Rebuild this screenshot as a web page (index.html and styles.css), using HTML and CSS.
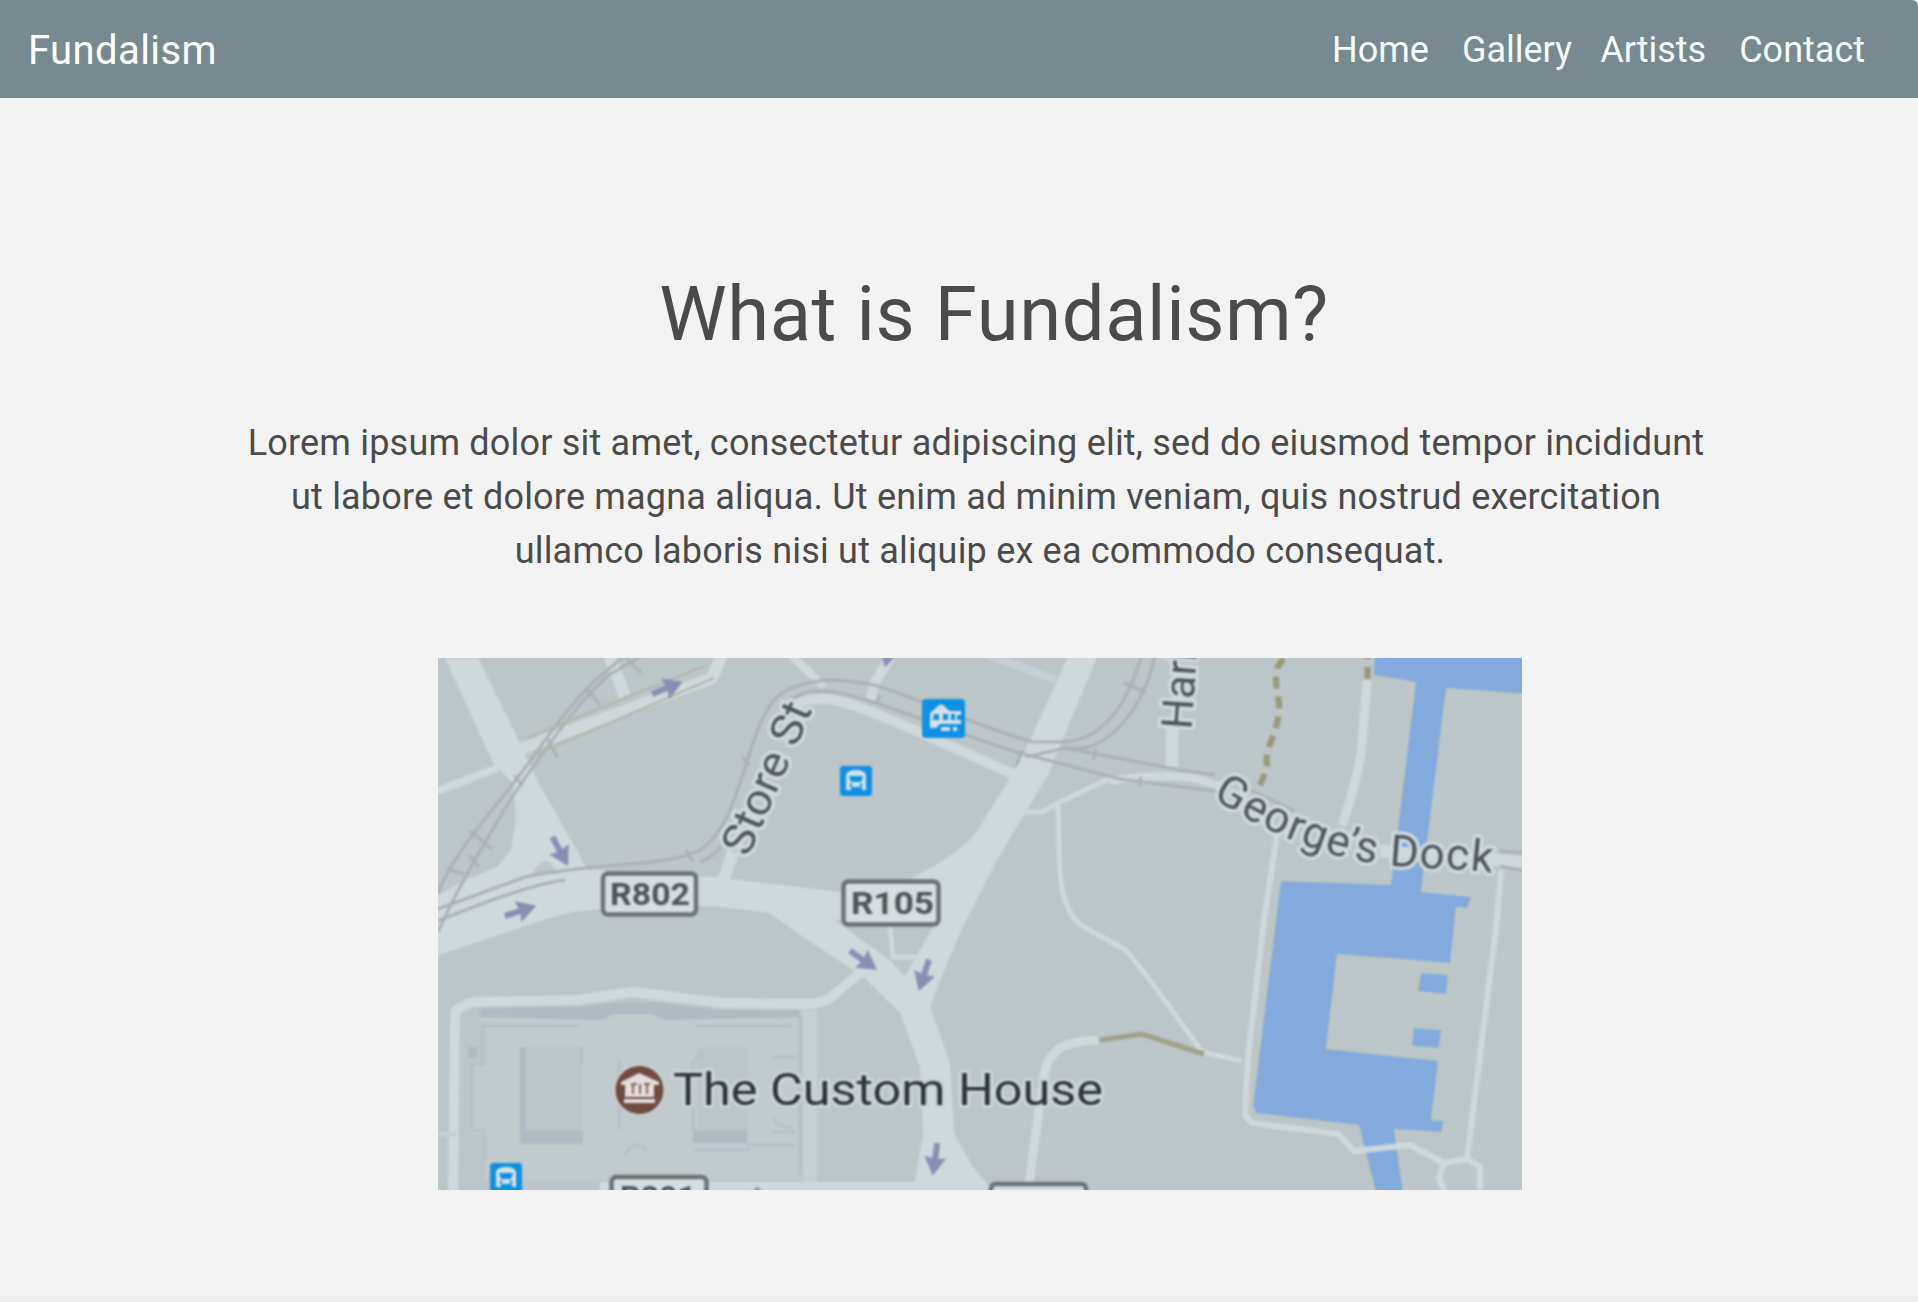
FILE: index.html
```html
<!DOCTYPE html>
<html lang="en">
<head>
<meta charset="utf-8">
<title>Fundalism</title>
<link rel="stylesheet" href="styles.css">
</head>
<body>
<header class="navbar">
  <a class="brand">Fundalism</a>
  <nav class="links">
    <a class="home">Home</a>
    <a class="gallery">Gallery</a>
    <a class="artists">Artists</a>
    <a>Contact</a>
  </nav>
</header>
<main class="content">
  <h1 class="title">What is Fundalism?</h1>
  <p class="intro">Lorem ipsum dolor sit amet, consectetur adipiscing elit, sed do eiusmod tempor incididunt<br>ut labore et dolore magna aliqua. Ut enim ad minim veniam, quis nostrud exercitation<br><span class="last">ullamco laboris nisi ut aliquip ex ea commodo consequat.</span></p>
  <svg class="map" viewBox="438 658 1084 532" role="img" aria-label="Map">
    <defs>
      <path id="dock" d="M1212 798C1250 821 1272 833 1310 847S1380 865 1409 867S1470 869 1510 875"/>
      <g id="arrow"><path class="arrow-line" d="M-16 0H3"/><path class="arrow-head" d="M17 0L-2-11L0 0L-2 11Z"/></g>
      <g id="bus">
        <rect class="sign" width="32" height="30" rx="3"/>
        <path class="glyph" d="M6 24V9Q7 4 16 4T26 9V24H22V21H11V24Z"/>
        <path class="sign" d="M9 10H23L21 16H11Z"/><circle class="sign" cx="11" cy="19" r="1.5"/><circle class="sign" cx="21" cy="19" r="1.5"/>
      </g>
    </defs>
    <g class="soft">
      <rect class="land" x="430" y="650" width="1100" height="550"/>
      <!-- Streets -->
      <path class="road" d="M445 658L493 763L513 783L516 817L511 850L497 867L463 881L430 900V958L543 920L573 912L630 907L713 906L770 913L800 935L850 968L863 977L900 1013L920 1067L923 1133L915 1182H600V1200H1000L973 1167L954 1133L950 1063L930 1007L947 963L963 927L997 860L1027 810L1047 777L1100 650H1071L1030 740L1013 773L973 837C955 853 935 867 913 877L890 892H840L800 887L713 877L588 870L537 780L520 743L478 658Z"/>
      <path class="land" d="M834 920H937L905 976L890 960Z"/>
      <path class="land" d="M530 877Q541 859 548 861L560 873Z"/>
      <g class="street">
        <path class="w8" d="M430 794L497 768M786 650L824 687"/>
        <path class="w12" d="M521 749L712 678L724 650M607 650L625 696M723 882L733 852"/>
        <path class="w10" d="M788 710Q805 696 834 700C862 705 930 737 1013 774M870 700L875 682L892 655"/>
        <path class="w8 dim" d="M986 654L1056 680"/>
        <path class="w12" d="M1172 720V768"/>
        <path class="w8" d="M1110 781Q1190 768 1226 790M1380 851L1522 862"/>
        <path class="w5" d="M1023 812H1042L1058 803L1110 778M1058 804C1060 845 1057 884 1067 905Q1073 921 1084 927L1124 949Q1133 955 1202 1052L1242 1061"/>
        <path class="w9" d="M1367 680L1362 745Q1358 780 1342 825M1029 1184L1043 1080Q1046 1055 1064 1046Q1073 1042 1098 1040"/>
        <path class="w6" d="M1277 835L1264 920L1248 1058L1245 1115L1252 1123L1338 1134L1354 1151L1410 1145L1444 1163L1467 1159L1497 920L1501 870M1444 1163L1439 1178L1446 1195M1467 1159L1480 1167V1195"/>
        <path class="w5" d="M890 925L893 957H918"/>
        <path class="w10" d="M453 1195L455 1012Q467 1001 477 1002L577 1000L633 992L723 1003L806 1004Q821 1004 830 998L863 970"/>
        <path class="w14 dim" d="M810 1010V1182"/>
        <path class="w5 dim" d="M438 1134H457"/>
      </g>
      <!-- Custom House building -->
      <path class="building" d="M480 1010H802V1180H485V1130H472V1064H485Z"/>
      <path class="shade" d="M480 1008L580 1007L620 1002H650L720 1010H800V1017L665 1020L650 1014H615L600 1020L480 1017ZM520 1047H526V1130H583V1144H520ZM693 1130H747V1143H693Z"/>
      <path class="land" d="M527 1047H582V1130H527ZM697 1047H748V1130H697Z"/>
      <path class="outline" d="M578 1026H483V1064H472V1130H485V1160M695 1026H792M800 1015V1052V1175M693 1130V1063L705 1050M747 1145H795M619 1060V1130M773 1057H797M773 1132H795M694 1150H750M582 1047V1065M625 1155Q636 1136 648 1153M774 1118Q780 1130 793 1127"/>
      <rect class="shade" x="468" y="1047" width="9" height="11"/>
      <!-- Dock water -->
      <g class="water">
        <path d="M1375 650H1530V694L1446 688L1421 892L1471 897L1467 908L1456 907L1450 963L1337 954L1326 1049L1438 1061L1431 1120L1444 1121L1441 1132L1394 1129L1404 1200H1378L1359 1125L1256 1113L1253 1106L1281 881L1391 885L1416 682L1374 675Z"/>
        <path d="M1421 973L1448 975L1446 994L1418 991ZM1414 1028L1441 1030L1439 1048L1412 1046Z"/>
      </g>
      <path class="street w6" d="M1354 1151L1410 1145"/>
      <path class="street w12" d="M1380 851L1522 862"/>
      <!-- Railways -->
      <g class="rail">
        <path d="M438 893C452 855 497 805 519 776C550 734 576 695 603 674L629 652M438 932C462 878 506 806 525 778C558 732 581 699 609 675L648 652"/>
        <path d="M430 912L525 877C600 861 665 868 700 850C742 822 745 735 774 700Q790 682 832 680Q865 681 890 690C930 704 985 729 1033 742H1065C1112 738 1132 690 1143 650"/>
        <path d="M430 924C470 908 530 884 565 880M700 862Q716 856 724 842M784 709C790 698 804 689 825 691C863 693 920 722 1020 753L1120 779L1222 792M1026 757L1065 748H1085C1120 739 1148 697 1156 650M1065 748L1180 770L1215 775M1250 790L1295 811M1500 851L1522 853M1500 866L1522 870"/>
        <path d="M587 689L600 705M626 658L641 673M548 739L557 757M514 776L523 785M470 831L492 849M469 855L479 867M446 869L464 874M742 757L750 765M686 850L693 862M876 705L880 695M1016 766L1023 750M1093 760L1097 749M1139 786L1141 777M1124 683L1146 692"/>
      </g>
      <path class="tan-edge" d="M527 738L704 666M530 757L714 678"/>
      <path class="tan" d="M1100 1040L1142 1034L1204 1054"/>
      <path class="tan dash" d="M1284 659C1268 671 1281 696 1279 711C1277 736 1264 748 1267 765Q1265 777 1256 792M1367.500 647V680"/>
      <!-- One-way arrows -->
      <use href="#arrow" transform="translate(667 688) rotate(-22)"/>
      <use href="#arrow" transform="translate(560 851) rotate(62)"/>
      <use href="#arrow" transform="translate(520 911) rotate(-18)"/>
      <use href="#arrow" transform="translate(863 960) rotate(35)"/>
      <use href="#arrow" transform="translate(924 975) rotate(108)"/>
      <use href="#arrow" transform="translate(935 1159) rotate(98)"/>
      <path class="arrow-head" d="M882 657H895L885 667ZM752 1191L757 1187L763 1191Z"/>
      <!-- Transit stops -->
      <use href="#bus" x="840" y="766"/><use href="#bus" x="490" y="1163"/>
      <rect class="sign" x="922" y="699" width="43" height="39" rx="4"/>
      <path class="glyph" d="M930 713L935 709Q941 700 947 709L950 711H961V715H957V720H961V724H940L936 728H930Z"/>
      <path class="sign" d="M934 714H939V720H933ZM943 714H948V720H943ZM951 714H955V720H951Z"/>
      <path class="glyph" d="M941 727H950V731H941ZM953 727H957V731H953Z"/>
      <!-- Route shields -->
      <g class="shield">
        <rect x="603" y="873.500" width="93" height="41" rx="5"/>
        <rect x="843.500" y="881.500" width="95" height="43" rx="5"/>
        <rect x="611.500" y="1177" width="95" height="43" rx="5"/>
        <rect x="991" y="1184" width="95" height="43" rx="5"/>
      </g>
      <g class="shield-text">
        <text x="610" y="905" textLength="80" lengthAdjust="spacingAndGlyphs">R802</text>
        <text x="851" y="913.500" textLength="83" lengthAdjust="spacingAndGlyphs">R105</text>
        <text x="620" y="1208" textLength="76" lengthAdjust="spacingAndGlyphs">R801</text>
      </g>
      <!-- Place names -->
      <g class="label">
        <text transform="translate(748 858) rotate(-66.500)" textLength="162" lengthAdjust="spacingAndGlyphs">Store St</text>
        <text class="upright" transform="translate(1191.500 730) rotate(-86)">Harb</text>
        <text class="curved"><textPath href="#dock">George’s Dock</textPath></text>
      </g>
      <circle class="halo" cx="639.500" cy="1090" r="26"/>
      <circle class="museum" cx="639.500" cy="1090" r="24"/>
      <path class="museum-glyph" d="M621 1082L639 1073L659 1082V1085H654V1097H625V1085H621ZM624 1099H655V1103H624Z"/>
      <path class="museum-lines" d="M633 1084V1094M640 1084V1094M647 1084V1094M631 1084H637M644 1084H650"/>
      <text class="place" x="673" y="1105" textLength="430" lengthAdjust="spacingAndGlyphs">The Custom House</text>
    </g>
  </svg>
</main>
<footer class="footer"></footer>
</body>
</html>
```
FILE: styles.css
```css
* { box-sizing: border-box; }
body {
  margin: 0;
  height: 1302px;
  display: flex;
  flex-direction: column;
  overflow: hidden;
  background: #f3f3f3;
  color: #4b4b4b;
  font-family: Roboto, sans-serif;
}
.navbar {
  height: 98px;
  flex: none;
  display: flex;
  align-items: center;
  justify-content: space-between;
  padding: 2px 53px 0 28px;
  background: #788a8f;
  border-top-right-radius: 6px;
  color: #fff;
}
.brand { font-size: 40px; letter-spacing: 0.4px; padding-top: 1px; }
.links { display: flex; font-size: 36px; color: #f5fcff; }
.home { margin-right: 33px; }
.gallery { margin-right: 28px; }
.artists { margin-right: 33px; }
.content {
  flex: 1;
  display: flex;
  flex-direction: column;
  align-items: center;
  padding-left: 42px;
}
.title {
  margin: 171px 0 0 28px;
  font-size: 76px;
  line-height: 90px;
  font-weight: 400;
  letter-spacing: 0.6px;
}
.intro {
  margin: 57px 0 0;
  padding-right: 8px;
  font-size: 36px;
  line-height: 54px;
  letter-spacing: 0.2px;
  text-align: center;
  white-space: nowrap;
}
.last { padding-left: 8px; }
.map { display: block; width: 1084px; height: 532px; margin: 80px 0 0; flex: none; }
.footer { height: 6px; flex: none; background: #ededed; }

.soft { filter: blur(1px); }
.land { fill: #bcc5c8; }
.road { fill: #cfd9dc; }
.street { fill: none; stroke: #cfd9dc; stroke-linejoin: round; }
.dim { stroke: #c6cfd3; }
.w5 { stroke-width: 5px; }
.w6 { stroke-width: 6px; }
.w8 { stroke-width: 8px; }
.w9 { stroke-width: 9px; }
.w10 { stroke-width: 10px; }
.w12 { stroke-width: 12px; }
.w14 { stroke-width: 14px; }
.building { fill: #c1cacd; }
.shade { fill: #b0bac2; }
.outline { fill: none; stroke: #b6c0ca; stroke-width: 3px; }
.water { fill: #82aadd; stroke: #c2c8c0; stroke-width: 4px; paint-order: stroke; }
.rail { fill: none; stroke: #abb2b5; stroke-width: 3px; }
.tan-edge { fill: none; stroke: #b4b5a9; stroke-width: 2px; }
.tan { fill: none; stroke: #a1a18c; stroke-width: 5px; }
.dash { stroke: #999878; stroke-width: 6px; stroke-dasharray: 12px 8px; }
.arrow-line { stroke: #8790b3; stroke-width: 6px; }
.arrow-head { fill: #8790b3; }
.sign { fill: #0e90e4; }
.glyph { fill: #d3e2ea; }
.shield { fill: #d5dee1; stroke: #6c7375; stroke-width: 4.500px; }
.shield-text { font-size: 31px; font-weight: 700; fill: #505557; }
.label {
  font-size: 44px;
  font-weight: 400;
  fill: #4f5558;
  stroke: #cfdade;
  stroke-width: 7px;
  stroke-linejoin: round;
  paint-order: stroke;
}
.upright { font-size: 43px; }
.curved { letter-spacing: 1.300px; }
.place {
  font-size: 45px;
  font-weight: 400;
  fill: #303334;
  stroke: #c9d5da;
  stroke-width: 6px;
  stroke-linejoin: round;
  paint-order: stroke;
}
.halo { fill: #cbd0d1; }
.museum { fill: #704b40; }
.museum-glyph { fill: #e2dfde; }
.museum-lines { fill: none; stroke: #80635b; stroke-width: 2px; }
```
